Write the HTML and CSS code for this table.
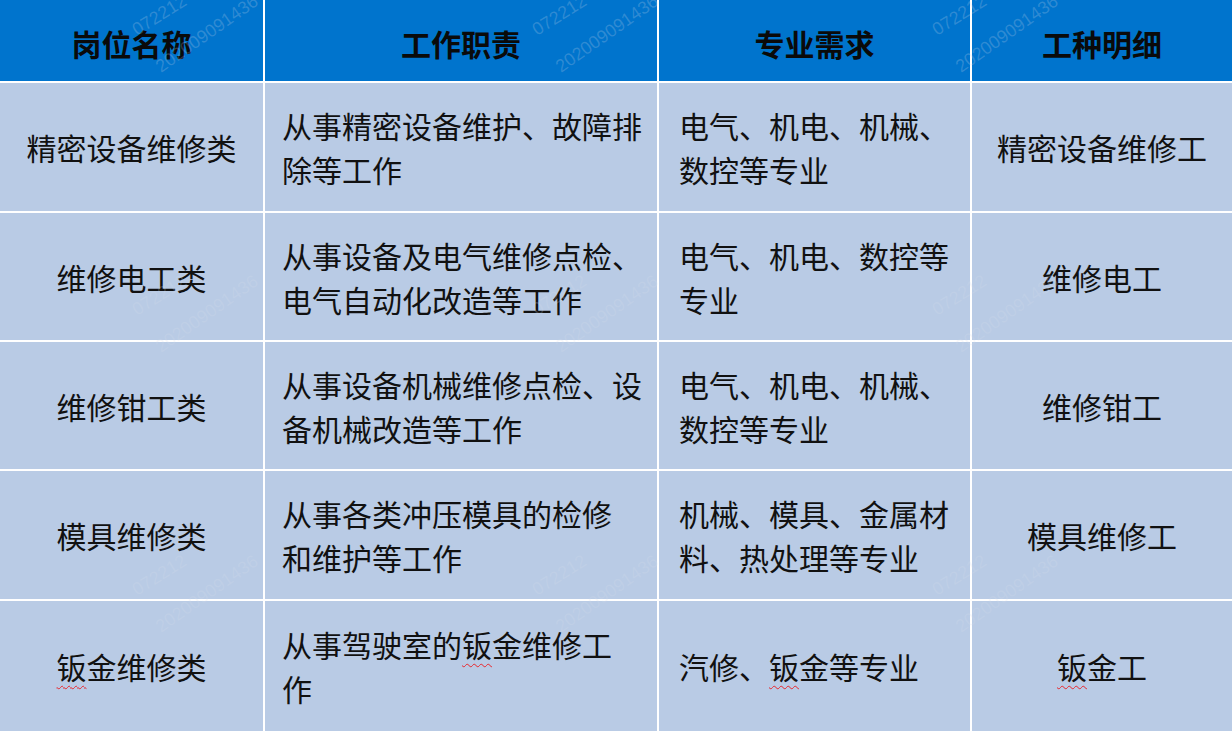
FILE: index.html
```html
<!DOCTYPE html>
<html lang="zh-CN">
<head>
<meta charset="utf-8">
<title>岗位表</title>
<link rel="stylesheet" href="styles.css">
</head>
<body>
<div class="page">
  <div class="table">
    <div class="cell head"><div class="txt">岗位名称</div></div>
    <div class="cell head"><div class="txt">工作职责</div></div>
    <div class="cell head"><div class="txt">专业需求</div></div>
    <div class="cell head"><div class="txt">工种明细</div></div>

    <div class="cell center"><div class="txt">精密设备维修类</div></div>
    <div class="cell left duty"><div class="txt">从事精密设备维护、故障排<br>除等工作</div></div>
    <div class="cell left major"><div class="txt">电气、机电、机械、<br>数控等专业</div></div>
    <div class="cell center"><div class="txt">精密设备维修工</div></div>

    <div class="cell center"><div class="txt">维修电工类</div></div>
    <div class="cell left duty"><div class="txt">从事设备及电气维修点检、<br>电气自动化改造等工作</div></div>
    <div class="cell left major"><div class="txt">电气、机电、数控等<br>专业</div></div>
    <div class="cell center"><div class="txt">维修电工</div></div>

    <div class="cell center"><div class="txt">维修钳工类</div></div>
    <div class="cell left duty"><div class="txt">从事设备机械维修点检、设<br>备机械改造等工作</div></div>
    <div class="cell left major"><div class="txt">电气、机电、机械、<br>数控等专业</div></div>
    <div class="cell center"><div class="txt">维修钳工</div></div>

    <div class="cell center"><div class="txt">模具维修类</div></div>
    <div class="cell left duty"><div class="txt">从事各类冲压模具的检修<br>和维护等工作</div></div>
    <div class="cell left major"><div class="txt">机械、模具、金属材<br>料、热处理等专业</div></div>
    <div class="cell center"><div class="txt">模具维修工</div></div>

    <div class="cell center"><div class="txt"><span class="sp">钣</span>金维修类</div></div>
    <div class="cell left duty"><div class="txt">从事驾驶室的<span class="sp">钣</span>金维修工<br>作</div></div>
    <div class="cell left major"><div class="txt">汽修、<span class="sp">钣</span>金等专业</div></div>
    <div class="cell center"><div class="txt"><span class="sp">钣</span>金工</div></div>
  </div>

  <div class="wm-layer" aria-hidden="true">
    <div class="wm"><span class="wm-a">072212</span><span class="wm-b">202009091436</span></div>
    <div class="wm"><span class="wm-a">072212</span><span class="wm-b">202009091436</span></div>
    <div class="wm"><span class="wm-a">072212</span><span class="wm-b">202009091436</span></div>
    <div class="wm"><span class="wm-a">072212</span><span class="wm-b">202009091436</span></div>
    <div class="wm"><span class="wm-a">072212</span><span class="wm-b">202009091436</span></div>
    <div class="wm"><span class="wm-a">072212</span><span class="wm-b">202009091436</span></div>
    <div class="wm"><span class="wm-a">072212</span><span class="wm-b">202009091436</span></div>
    <div class="wm"><span class="wm-a">072212</span><span class="wm-b">202009091436</span></div>
    <div class="wm"><span class="wm-a">072212</span><span class="wm-b">202009091436</span></div>
  </div>
</div>
</body>
</html>
```
FILE: styles.css
```css
html, body {
  margin: 0;
  padding: 0;
  background: #ffffff;
}

.page {
  position: relative;
  width: 1232px;
  height: 731px;
  overflow: hidden;
}

.table {
  display: grid;
  grid-template-columns: 263px 392px 311px 260px;
  grid-template-rows: 81px 128px 127px 127px 128px 130px;
  gap: 2px;
  background: #ffffff;
  width: 1232px;
  height: 731px;
  font-family: "Noto Sans CJK SC", "Noto Sans", sans-serif;
  font-size: 30px;
  color: #111111;
}

.cell {
  display: flex;
  align-items: center;
  background: #b9cbe5;
  line-height: 44px;
  white-space: nowrap;
}

.txt {
  display: block;
}

.head {
  background: #0074cd;
  justify-content: center;
  font-weight: 700;
  color: #0a0a0a;
  padding-top: 4px;
  box-sizing: border-box;
}

.center {
  justify-content: center;
}

.left {
  justify-content: flex-start;
}

.duty {
  padding-left: 17px;
}

.major {
  padding-left: 20px;
}

.sp {
  text-decoration: underline wavy #e8262b;
  text-decoration-thickness: 1px;
  text-underline-offset: 6px;
}

.wm-layer {
  position: absolute;
  inset: 0;
  display: grid;
  grid-template-columns: repeat(3, 400px);
  grid-auto-rows: 280px;
  pointer-events: none;
  font-family: "Liberation Sans", Arial, sans-serif;
  font-size: 18px;
  line-height: 18px;
  color: rgba(215, 222, 235, 0.22);
}

.wm {
  position: relative;
}

.wm-a,
.wm-b {
  position: absolute;
  white-space: nowrap;
  transform-origin: 0 15px;
}

.wm-a {
  left: 137px;
  top: 21px;
  transform: rotate(-32deg);
}

.wm-b {
  left: 161px;
  top: 58px;
  transform: rotate(-35deg);
}
```
